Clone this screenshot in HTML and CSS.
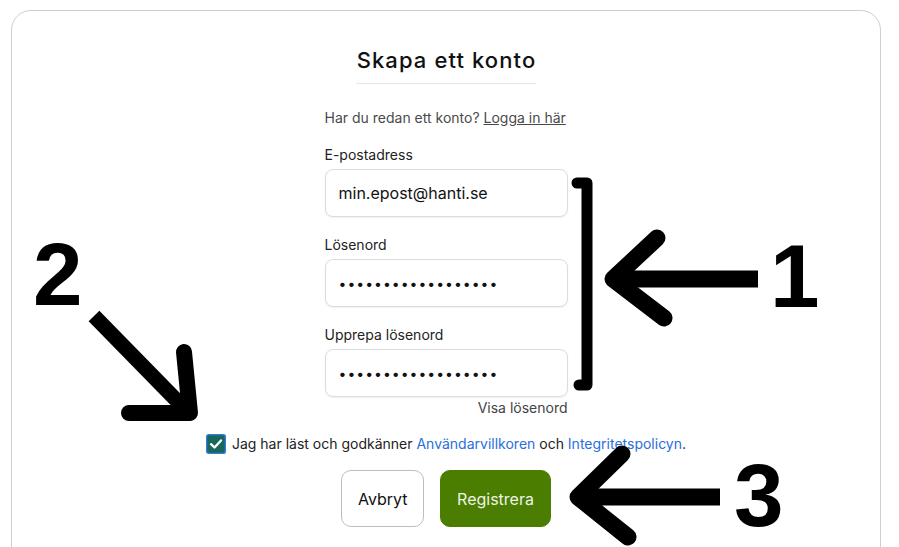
FILE: index.html
```html
<!DOCTYPE html>
<html lang="sv">
<head>
<meta charset="utf-8">
<title>Skapa ett konto</title>
<link rel="stylesheet" href="styles.css">
</head>
<body>
<div class="page">
  <main class="card">
    <div class="title-wrap"><h1 class="title">Skapa ett konto</h1></div>
    <p class="login">Har du redan ett konto? <a href="#" class="login-link">Logga in här</a></p>
    <form class="form">
      <label class="field">
        <span class="label">E-postadress</span>
        <input class="input" type="email" value="min.epost@hanti.se">
      </label>
      <label class="field">
        <span class="label">Lösenord</span>
        <input class="input" type="password" value="abcdefghijklmnopqr">
      </label>
      <label class="field">
        <span class="label">Upprepa lösenord</span>
        <input class="input" type="password" value="abcdefghijklmnopqr">
      </label>
      <div class="show-row"><a href="#" class="show">Visa lösenord</a></div>
    </form>
    <div class="terms">
      <span class="check"><svg viewBox="0 0 20 20" width="20" height="20"><rect x="0.5" y="0.5" width="19" height="19" rx="3" fill="#17675f" stroke="#3a7bd5" stroke-width="1.5"/><path d="M5 10.2 L8.5 13.5 L15 6.5" fill="none" stroke="#fff" stroke-width="2.4" stroke-linecap="round" stroke-linejoin="round"/></svg></span>
      <span class="terms-text">Jag har läst och godkänner <a href="#" class="link">Användarvillkoren</a> och <a href="#" class="link">Integritetspolicyn</a>.</span>
    </div>
    <div class="actions">
      <button type="button" class="btn btn-cancel">Avbryt</button>
      <button type="button" class="btn btn-primary">Registrera</button>
    </div>
  </main>
  <svg class="annot" width="899" height="547" viewBox="0 0 899 547">
    <g fill="none" stroke="#000" stroke-linecap="round" stroke-linejoin="round">
      <path d="M577 183 L587 183 L587 385 L579 385" stroke-width="11"/>
      <path d="M657 238 L613 279 L664 318" stroke-width="17"/>
      <path d="M616 279 L758 279" stroke-width="17" stroke-linecap="butt"/>
      <path d="M94 316 L186 410" stroke-width="15" stroke-linecap="butt"/>
      <path d="M184 352 L190 413 L129 413" stroke-width="16"/>
      <path d="M622 454 L578 497 L628 537" stroke-width="17"/>
      <path d="M582 497 L720 497" stroke-width="17" stroke-linecap="butt"/>
    </g>
    <text class="num" x="770" y="307">1</text>
    <text class="num" x="33" y="305">2</text>
    <text class="num" x="734" y="526">3</text>
  </svg>
</div>
</body>
</html>
```
FILE: styles.css
```css
* { box-sizing: border-box; }
html, body { margin: 0; padding: 0; background: #fff; }
body {
  font-family: Inter, "Noto Sans", sans-serif;
  color: #111;
  width: 899px;
  height: 547px;
  overflow: hidden;
}
.page {
  position: relative;
  padding: 10px 18px 0 11px;
  height: 547px;
  overflow: hidden;
}
.card {
  width: 870px;
  height: 560px;
  border: 1px solid #cfcfcf;
  border-radius: 20px;
  background: #fff;
  display: flex;
  flex-direction: column;
  align-items: center;
  padding-top: 36px;
}
.title-wrap { display: flex; justify-content: center; }
.title {
  margin: 0;
  font-size: 22px;
  font-weight: 500;
  letter-spacing: 1.1px;
  line-height: 26px;
  padding: 0 0 10px 1px;
  border-bottom: 1px solid #e6e6e6;
  color: #111;
}
.login {
  margin: 25px 0 0;
  font-size: 14px;
  line-height: 18px;
  color: #4a4a4a;
  width: 243px;
}
.login-link { color: #4a4a4a; text-decoration: underline; }
.form {
  width: 243px;
  display: flex;
  flex-direction: column;
  gap: 18px;
  margin-top: 18px;
}
.field { display: flex; flex-direction: column; gap: 4px; }
.label { font-size: 14px; line-height: 20px; color: #222; }
.input {
  height: 48px;
  width: 243px;
  border: 1px solid #dcdcdc;
  border-radius: 8px;
  padding: 0 13px;
  font-family: Inter, "Noto Sans", sans-serif;
  font-size: 16px;
  color: #111;
  background: #fff;
  box-shadow: 0 1px 2px rgba(0,0,0,0.06);
  outline: none;
}
.input[type=password] { letter-spacing: 1px; font-size: 14px; }
.show-row { display: flex; justify-content: flex-end; margin-top: -17px; }
.show { font-size: 14px; line-height: 20px; color: #444; text-decoration: none; }
.terms {
  display: flex;
  align-items: center;
  gap: 6px;
  margin-top: 16px;
  font-size: 14px;
  line-height: 20px;
  color: #222;
}
.check { display: flex; width: 20px; height: 20px; }
.link { color: #2a6fdb; text-decoration: none; }
.actions {
  display: flex;
  gap: 16px;
  margin-top: 16px;
}
.btn {
  height: 57px;
  border-radius: 10px;
  font-family: Inter, "Noto Sans", sans-serif;
  font-size: 16px;
  padding: 0 16px;
  cursor: pointer;
}
.btn-cancel {
  width: 83px;
  background: #fff;
  border: 1px solid #bdbdbd;
  color: #111;
}
.btn-primary {
  width: 111px;
  background: #4a7d00;
  border: 1px solid #4a7d00;
  color: #eef4e6;
}
.annot {
  position: absolute;
  left: 0;
  top: 0;
  pointer-events: none;
}
.num {
  font-family: "Liberation Sans", Arial, sans-serif;
  font-weight: 700;
  font-size: 89px;
  fill: #000;
}
```
